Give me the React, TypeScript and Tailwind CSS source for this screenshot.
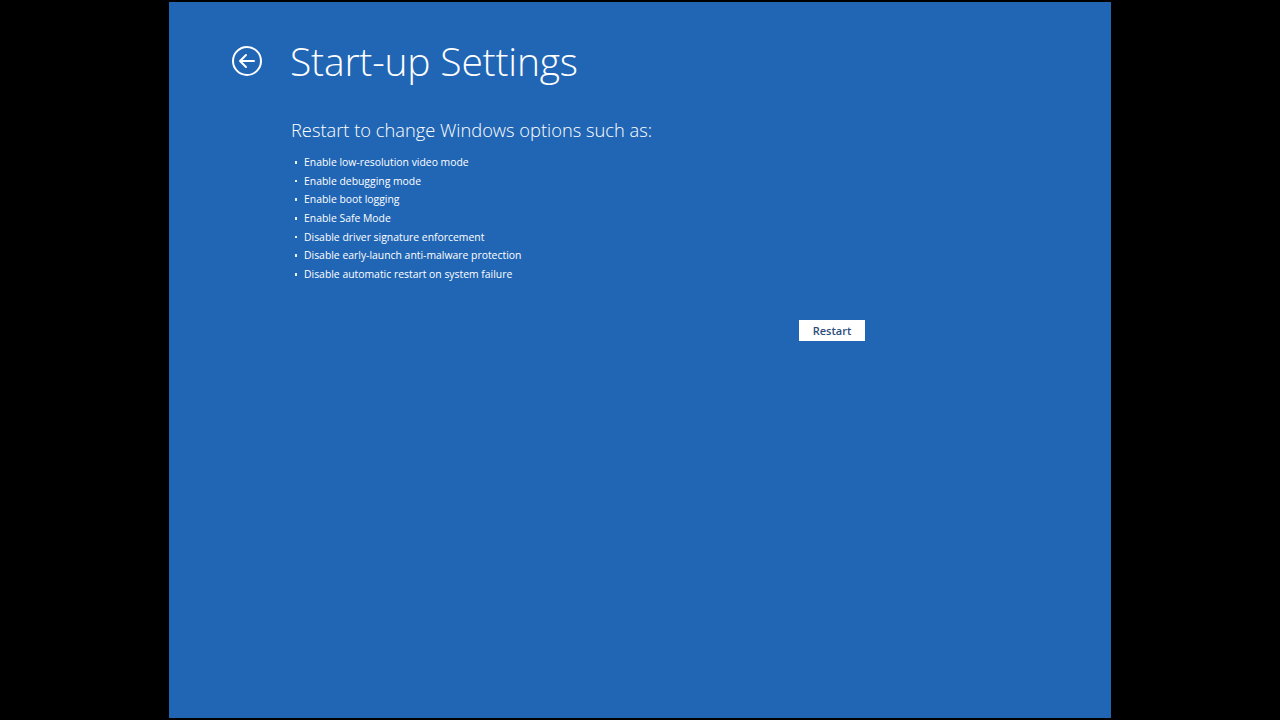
import React from "react";

const items = [
  "Enable low-resolution video mode",
  "Enable debugging mode",
  "Enable boot logging",
  "Enable Safe Mode",
  "Disable driver signature enforcement",
  "Disable early-launch anti-malware protection",
  "Disable automatic restart on system failure",
];

export default function App() {
  return (
    <div className="w-[1280px] h-[720px] bg-black pt-[2px] pl-[169px] overflow-hidden" style={{ fontFamily: '"Open Sans", "Noto Sans", sans-serif' }}>
      <div className="w-[942px] h-[716px] bg-[#2166b5] text-white flex flex-col">
        <div className="flex items-center pl-[62px] pt-[35px]">
          <svg width="32" height="32" viewBox="0 0 32 32" fill="none" stroke="white" strokeWidth="2">
            <circle cx="16" cy="16" r="14" />
            <path d="M9 16h14M15 10l-6 6 6 6" strokeLinecap="round" strokeLinejoin="round" />
          </svg>
          <h1 className="ml-[27px] text-[39px] font-light leading-[48px] tracking-[-0.2px]">Start-up Settings</h1>
        </div>
        <div className="pl-[122px] pt-[31px]">
          <h2 className="text-[18.3px] font-light leading-[28px]">Restart to change Windows options such as:</h2>
          <ul className="mt-[9px] text-[10.4px] leading-[18.67px]">
            {items.map((t) => (
              <li key={t} className="flex items-center">
                <span className="w-[2.5px] h-[2.5px] bg-white/90 ml-[3.5px] mr-[7px]" />
                <span>{t}</span>
              </li>
            ))}
          </ul>
          <div className="flex pl-[508px] mt-[36px]">
            <button className="w-[66px] h-[21px] bg-white text-[#2b4d7a] text-[11px] font-semibold leading-[21px]">Restart</button>
          </div>
        </div>
      </div>
    </div>
  );
}
